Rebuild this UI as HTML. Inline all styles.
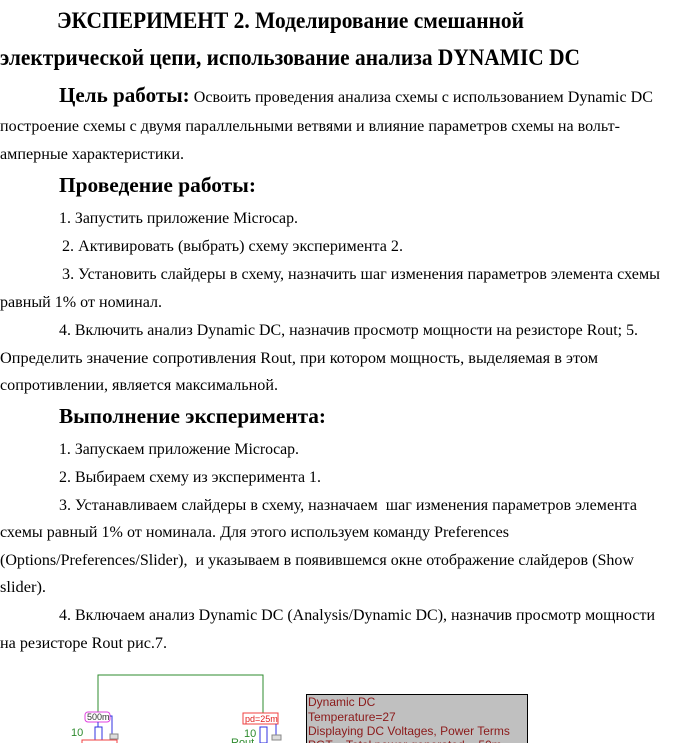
<!DOCTYPE html>
<html><head><meta charset="utf-8"><style>
html,body{margin:0;padding:0;background:#fff;width:683px;height:743px;overflow:hidden;position:relative}
.l{position:absolute;white-space:nowrap;font-family:"Liberation Serif","DejaVu Serif",serif;color:#000;transform-origin:0 0;font-size:16px;line-height:18px}
.b{font-weight:bold}
.h1{font-size:23px;line-height:26px}
.h2{font-size:21px;line-height:24px}
</style></head><body>
<div class="l b h1" style="left:57px;top:8px"><span>ЭКСПЕРИМЕНТ 2. Моделирование смешанной</span></div>
<div class="l b h1" style="left:0;top:45px"><span>электрической цепи, использование анализа DYNAMIC DC</span></div>
<div class="l" style="left:59px;top:86px"><span><b style="font-size:21px">Цель работы:</b> Освоить проведения анализа схемы с использованием Dynamic DC</span></div>
<div class="l" style="left:0;top:118px"><span>построение схемы с двумя параллельными ветвями и влияние параметров схемы на вольт-</span></div>
<div class="l" style="left:0;top:146px"><span>амперные характеристики.</span></div>
<div class="l b h2" style="left:59px;top:173px"><span>Проведение работы:</span></div>
<div class="l" style="left:59px;top:210px"><span>1. Запустить приложение Microcap.</span></div>
<div class="l" style="left:62px;top:238px"><span>2. Активировать (выбрать) схему эксперимента 2.</span></div>
<div class="l" style="left:62px;top:266px"><span>3. Установить слайдеры в схему, назначить шаг изменения параметров элемента схемы</span></div>
<div class="l" style="left:0;top:294px"><span>равный 1% от номинал.</span></div>
<div class="l" style="left:59px;top:322px"><span>4. Включить анализ Dynamic DC, назначив просмотр мощности на резисторе Rout; 5.</span></div>
<div class="l" style="left:0;top:350px"><span>Определить значение сопротивления Rout, при котором мощность, выделяемая в этом</span></div>
<div class="l" style="left:0;top:377px"><span>сопротивлении, является максимальной.</span></div>
<div class="l b h2" style="left:59px;top:404px"><span>Выполнение эксперимента:</span></div>
<div class="l" style="left:59px;top:441px"><span>1. Запускаем приложение Microcap.</span></div>
<div class="l" style="left:59px;top:469px"><span>2. Выбираем схему из эксперимента 1.</span></div>
<div class="l" style="left:59px;top:497px"><span>3. Устанавливаем слайдеры в схему, назначаем&nbsp; шаг изменения параметров элемента</span></div>
<div class="l" style="left:0;top:524px"><span>схемы равный 1% от номинала. Для этого используем команду Preferences</span></div>
<div class="l" style="left:0;top:552px"><span>(Options/Preferences/Slider),&nbsp; и указываем в появившемся окне отображение слайдеров (Show</span></div>
<div class="l" style="left:0;top:579px"><span>slider).</span></div>
<div class="l" style="left:59px;top:607px"><span>4. Включаем анализ Dynamic DC (Analysis/Dynamic DC), назначив просмотр мощности</span></div>
<div class="l" style="left:0;top:635px"><span>на резисторе Rout рис.7.</span></div>

<svg style="position:absolute;left:0;top:660px" width="683" height="83">
<polyline points="98,55 98,15 263,15 263,55" fill="none" stroke="#2e8b2e" stroke-width="1"/>
<rect x="85" y="52" width="25" height="10" rx="3" fill="#fff" stroke="#e040e0"/>
<text x="87" y="60" font-family="Liberation Sans" font-size="9" fill="#333">500m</text>
<rect x="243" y="53" width="35" height="11" fill="#fff" stroke="#f04040"/>
<text x="245" y="62" font-family="Liberation Sans" font-size="9" fill="#e02020">pd=25m</text>
<rect x="95" y="67" width="7" height="16" fill="none" stroke="#3030e0"/>
<line x1="98" y1="62" x2="98" y2="67" stroke="#3030e0"/>
<polyline points="110,56 112,56 112,76" fill="none" stroke="#3030e0"/>
<rect x="110" y="74" width="8" height="5" fill="#ddd" stroke="#888"/>
<rect x="260" y="67" width="7" height="16" fill="none" stroke="#3030e0"/>
<polyline points="276,64 276,76" fill="none" stroke="#3030e0"/>
<rect x="272" y="75" width="9" height="5" fill="#ddd" stroke="#888"/>
<text x="71" y="76" font-family="Liberation Sans" font-size="11" fill="#2e8b2e">10</text>
<text x="244" y="77" font-family="Liberation Sans" font-size="11" fill="#2e8b2e">10</text>
<text x="231" y="86" font-family="Liberation Sans" font-size="11" fill="#2e8b2e">Rout</text>
<rect x="82" y="80" width="35" height="10" fill="#fff" stroke="#f04040"/>
<rect x="306.5" y="34.5" width="221" height="60" fill="#c0c0c0" stroke="#000"/>
<text font-family="Liberation Sans" font-size="12" fill="#8b1a1a">
<tspan x="308" y="46">Dynamic DC</tspan>
<tspan x="308" y="61">Temperature=27</tspan>
<tspan x="308" y="75">Displaying DC Voltages, Power Terms</tspan>
<tspan x="308" y="89">PGT = Total power generated = 50m</tspan>
</text>
</svg>
<script>
var W=[467,580,594,620,184,197,239,341,598,162,579,598,278,267,240,262,578,509,634,46,596,167];
var ls=document.querySelectorAll('.l');
for(var i=0;i<ls.length;i++){var s=ls[i].firstElementChild;var w=s.getBoundingClientRect().width;
ls[i].style.transform='scaleX('+(W[i]/w)+')';}
</script>
</body></html>
